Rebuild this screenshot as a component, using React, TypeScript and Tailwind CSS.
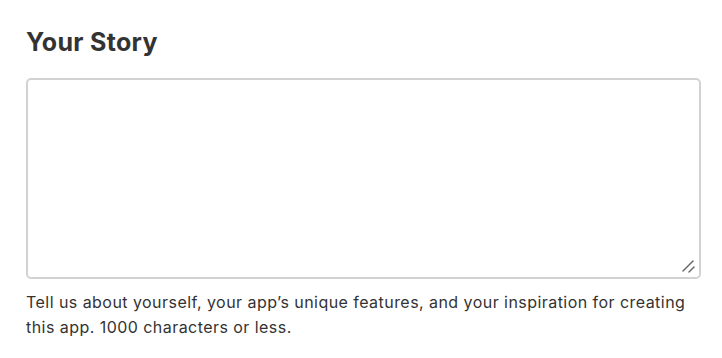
export default function App() {
  return (
    <div className="bg-white w-[722px] h-[358px] pl-[26px] pr-[22px] pt-[26px]" style={{ fontFamily: "Inter, 'Noto Sans', sans-serif" }}>
      <h2 className="text-[25px] leading-[32px] font-bold tracking-[0.3px] text-[#333333]">Your Story</h2>
      <div className="relative mt-[20px] w-[675px] h-[201px]">
        <textarea className="block w-full h-full resize-none rounded-[5px] border-2 border-[#d2d2d2] bg-white outline-none" />
        <svg className="absolute left-[655px] top-[181px]" width="16" height="16" viewBox="0 0 16 16">
          <line x1="2" y1="12" x2="12" y2="2" stroke="#666666" strokeWidth="1.5" strokeLinecap="round" />
          <line x1="8" y1="13" x2="13" y2="8" stroke="#666666" strokeWidth="1.5" strokeLinecap="round" />
        </svg>
      </div>
      <p className="mt-[11px] text-[16px] leading-[25px] tracking-[0.45px] text-[#333333] w-[675px]">
        Tell us about yourself, your app’s unique features, and your inspiration for creating this app. 1000 characters or less.
      </p>
    </div>
  );
}
